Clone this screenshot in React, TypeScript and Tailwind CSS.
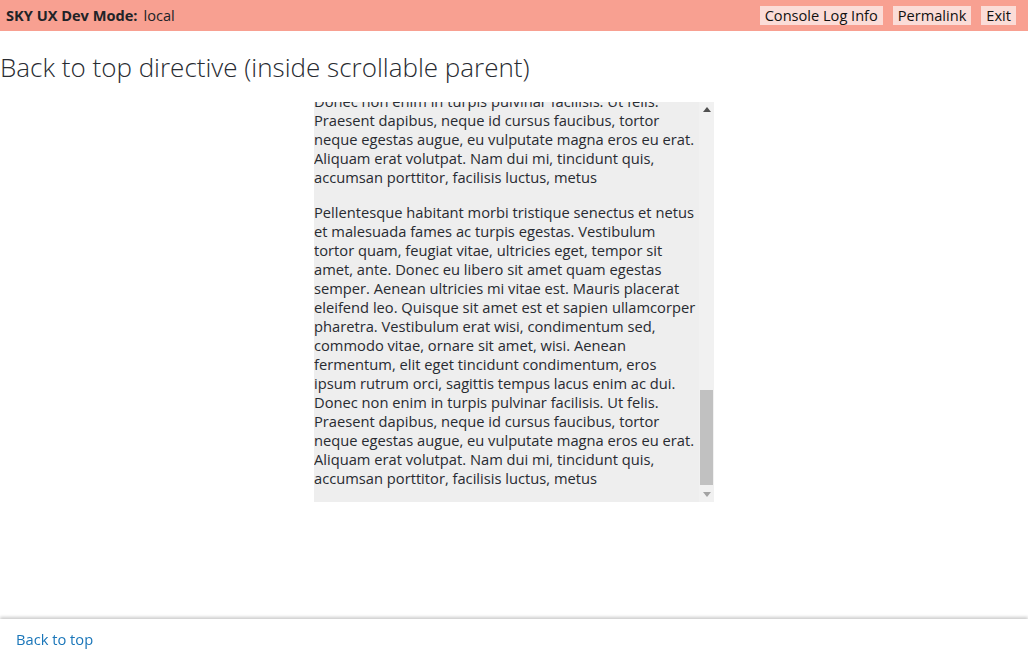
import { useLayoutEffect, useRef } from 'react';

const lines = [
  'Pellentesque habitant morbi tristique senectus et netus',
  'et malesuada fames ac turpis egestas. Vestibulum',
  'tortor quam, feugiat vitae, ultricies eget, tempor sit',
  'amet, ante. Donec eu libero sit amet quam egestas',
  'semper. Aenean ultricies mi vitae est. Mauris placerat',
  'eleifend leo. Quisque sit amet est et sapien ullamcorper',
  'pharetra. Vestibulum erat wisi, condimentum sed,',
  'commodo vitae, ornare sit amet, wisi. Aenean',
  'fermentum, elit eget tincidunt condimentum, eros',
  'ipsum rutrum orci, sagittis tempus lacus enim ac dui.',
  'Donec non enim in turpis pulvinar facilisis. Ut felis.',
  'Praesent dapibus, neque id cursus faucibus, tortor',
  'neque egestas augue, eu vulputate magna eros eu erat.',
  'Aliquam erat volutpat. Nam dui mi, tincidunt quis,',
  'accumsan porttitor, facilisis luctus, metus',
];

const paragraphs = [1, 2, 3, 4, 5];

const DevBar = () => (
  <header className="h-[31px] bg-[#f8a091] flex items-center justify-between pl-[6px] pr-[12px] text-[14.6px] text-[#212327]">
    <div className="flex items-center gap-[6px]">
      <span className="font-bold">SKY UX Dev Mode:</span>
      <span>local</span>
    </div>
    <div className="flex items-center gap-[10px]">
      {['Console Log Info', 'Permalink', 'Exit'].map((label) => (
        <button key={label} className="bg-[#fbdcd7] px-[5px] h-[19px] leading-[19px] text-[14.6px] text-[#111]">
          {label}
        </button>
      ))}
    </div>
  </header>
);

// overlay scrollbar drawn over the right edge of the box (content is scrolled to the end)
const ScrollBar = () => (
  <div className="absolute top-0 right-0 w-[15px] h-full bg-[#f1f1f1] flex flex-col items-center">
    <div className="h-[15px] w-full flex items-center justify-center">
      <svg width="8" height="5" viewBox="0 0 8 5"><path d="M4 0 L8 5 L0 5 Z" fill="#505050" /></svg>
    </div>
    <div className="flex-1 w-full flex flex-col justify-end px-[1px] pb-[2px]">
      <div className="h-[95px] w-full bg-[#c1c1c1]" />
    </div>
    <div className="h-[15px] w-full flex items-center justify-center">
      <svg width="8" height="5" viewBox="0 0 8 5"><path d="M0 0 L8 0 L4 5 Z" fill="#a3a3a3" /></svg>
    </div>
  </div>
);

const App = () => {
  const boxRef = useRef<HTMLDivElement>(null);

  useLayoutEffect(() => {
    if (boxRef.current) boxRef.current.scrollTop = boxRef.current.scrollHeight;
  }, []);

  return (
    <div className="min-h-[656px] bg-white text-[#282b31]" style={{ fontFamily: '"Open Sans", "Liberation Sans", sans-serif' }}>
      <DevBar />
      <h1 className="text-[26px] font-light leading-[32px] mt-[20px] mb-[19px]">
        Back to top directive (inside scrollable parent)
      </h1>
      <div className="relative w-[400px] h-[400px] mx-auto bg-[#eeeeee]">
        <div ref={boxRef} className="h-full overflow-hidden pr-[15px]">
          {paragraphs.map((p) => (
            <p key={p} className="text-[14.7px] leading-[19px] mb-[16px] last:mb-[14px]">
              {lines.map((l, i) => (
                <span key={i} className="block whitespace-nowrap">{l}</span>
              ))}
            </p>
          ))}
        </div>
        <ScrollBar />
      </div>

      <footer className="fixed left-0 right-0 bottom-0 h-[37px] bg-white shadow-[0_-2px_3px_rgba(0,0,0,0.2)] flex items-center px-[16px]">
        <a href="#" className="text-[14.7px] text-[#1a76b9] leading-[20px] mt-[2px]">Back to top</a>
      </footer>
    </div>
  );
};

export default App;
